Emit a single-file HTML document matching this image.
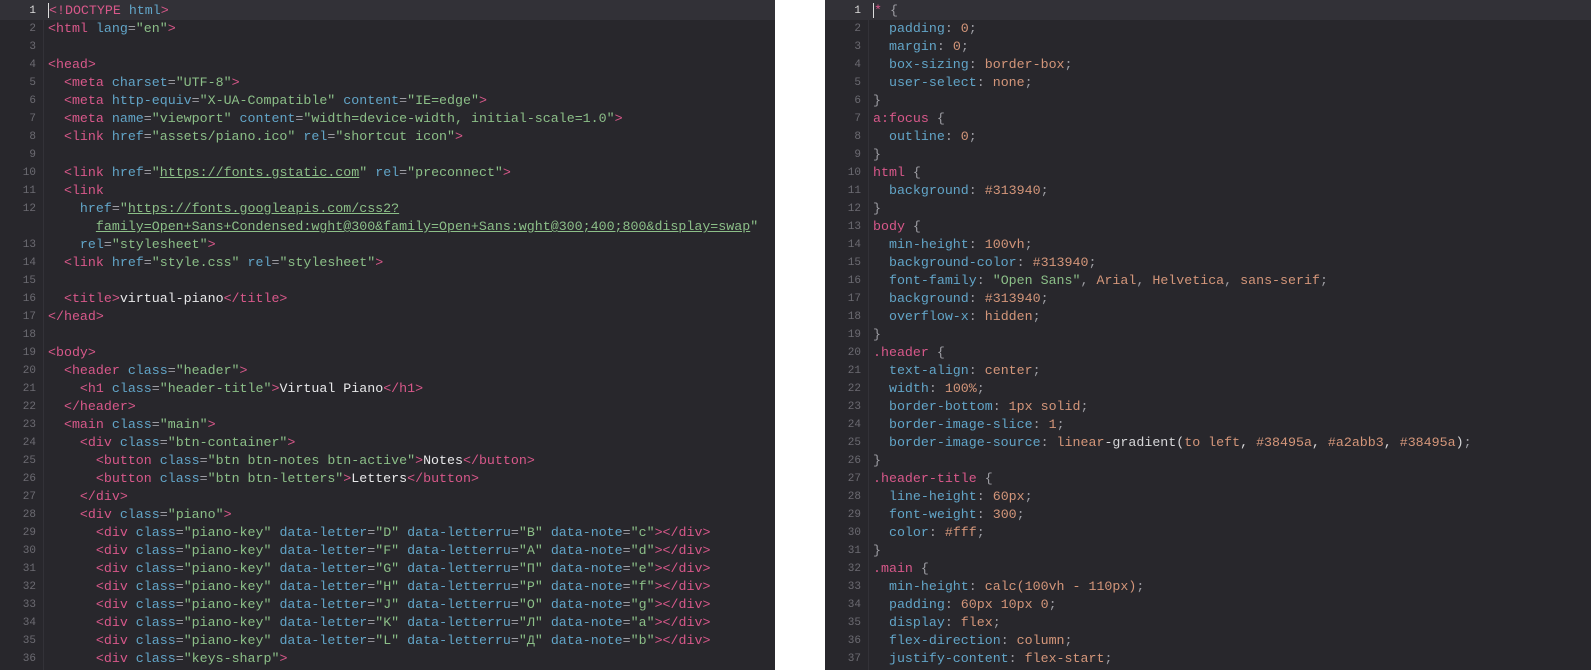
<!DOCTYPE html>
<html><head><meta charset="utf-8"><style>
*{margin:0;padding:0;box-sizing:border-box}
body{width:1591px;height:670px;background:#fff;position:relative;overflow:hidden;font-family:"Liberation Mono","DejaVu Sans Mono",monospace;font-size:13.3px}
.pane{position:absolute;top:0;height:670px;background:#28272c;padding-top:2px}
#L{left:0;width:775px}#R{left:825px;width:766px}
.g{position:absolute;top:0;left:43px;width:1px;height:670px;background:#333238}
.ln{height:18px;line-height:18px;white-space:pre;position:relative;color:#d8d8da}
.ln i{font-style:normal;position:absolute;left:0;width:36px;text-align:right;color:#6c6b72;font-size:11px}
.ln b{font-weight:normal;position:absolute;left:48px}
.cur{background:#323137;box-shadow:0 -2px 0 #323137}
.cur i{color:#ddd}
.t{color:#d8588a}.a{color:#62a5c8}.s{color:#8cbf88}.p{color:#9d9da3}.v{color:#d4967a}.w{color:#e8e8ea}
.cursor{border-left:1px solid #ddd}
</style></head><body>
<div class="pane" id="L"><div class="g"></div>
<div class="ln cur"><i>1</i><b><span class="t cursor">&lt;!DOCTYPE</span> <span class="a">html</span><span class="t">&gt;</span></b></div>
<div class="ln"><i>2</i><b><span class="t">&lt;html</span> <span class="a">lang</span><span class="p">=</span><span class="s">"en"</span><span class="t">&gt;</span></b></div>
<div class="ln"><i>3</i></div>
<div class="ln"><i>4</i><b><span class="t">&lt;head&gt;</span></b></div>
<div class="ln"><i>5</i><b>  <span class="t">&lt;meta</span> <span class="a">charset</span><span class="p">=</span><span class="s">"UTF-8"</span><span class="t">&gt;</span></b></div>
<div class="ln"><i>6</i><b>  <span class="t">&lt;meta</span> <span class="a">http-equiv</span><span class="p">=</span><span class="s">"X-UA-Compatible"</span> <span class="a">content</span><span class="p">=</span><span class="s">"IE=edge"</span><span class="t">&gt;</span></b></div>
<div class="ln"><i>7</i><b>  <span class="t">&lt;meta</span> <span class="a">name</span><span class="p">=</span><span class="s">"viewport"</span> <span class="a">content</span><span class="p">=</span><span class="s">"width=device-width, initial-scale=1.0"</span><span class="t">&gt;</span></b></div>
<div class="ln"><i>8</i><b>  <span class="t">&lt;link</span> <span class="a">href</span><span class="p">=</span><span class="s">"assets/piano.ico"</span> <span class="a">rel</span><span class="p">=</span><span class="s">"shortcut icon"</span><span class="t">&gt;</span></b></div>
<div class="ln"><i>9</i></div>
<div class="ln"><i>10</i><b>  <span class="t">&lt;link</span> <span class="a">href</span><span class="p">=</span><span class="s">"<u>https://fonts.gstatic.com</u>"</span> <span class="a">rel</span><span class="p">=</span><span class="s">"preconnect"</span><span class="t">&gt;</span></b></div>
<div class="ln"><i>11</i><b>  <span class="t">&lt;link</span></b></div>
<div class="ln"><i>12</i><b>    <span class="a">href</span><span class="p">=</span><span class="s">"<u>https://fonts.googleapis.com/css2?</u></span></b></div>
<div class="ln"><b>      <span class="s"><u>family=Open+Sans+Condensed:wght@300&amp;family=Open+Sans:wght@300;400;800&amp;display=swap</u>"</span></b></div>
<div class="ln"><i>13</i><b>    <span class="a">rel</span><span class="p">=</span><span class="s">"stylesheet"</span><span class="t">&gt;</span></b></div>
<div class="ln"><i>14</i><b>  <span class="t">&lt;link</span> <span class="a">href</span><span class="p">=</span><span class="s">"style.css"</span> <span class="a">rel</span><span class="p">=</span><span class="s">"stylesheet"</span><span class="t">&gt;</span></b></div>
<div class="ln"><i>15</i></div>
<div class="ln"><i>16</i><b>  <span class="t">&lt;title&gt;</span><span class="w">virtual-piano</span><span class="t">&lt;/title&gt;</span></b></div>
<div class="ln"><i>17</i><b><span class="t">&lt;/head&gt;</span></b></div>
<div class="ln"><i>18</i></div>
<div class="ln"><i>19</i><b><span class="t">&lt;body&gt;</span></b></div>
<div class="ln"><i>20</i><b>  <span class="t">&lt;header</span> <span class="a">class</span><span class="p">=</span><span class="s">"header"</span><span class="t">&gt;</span></b></div>
<div class="ln"><i>21</i><b>    <span class="t">&lt;h1</span> <span class="a">class</span><span class="p">=</span><span class="s">"header-title"</span><span class="t">&gt;</span><span class="w">Virtual Piano</span><span class="t">&lt;/h1&gt;</span></b></div>
<div class="ln"><i>22</i><b>  <span class="t">&lt;/header&gt;</span></b></div>
<div class="ln"><i>23</i><b>  <span class="t">&lt;main</span> <span class="a">class</span><span class="p">=</span><span class="s">"main"</span><span class="t">&gt;</span></b></div>
<div class="ln"><i>24</i><b>    <span class="t">&lt;div</span> <span class="a">class</span><span class="p">=</span><span class="s">"btn-container"</span><span class="t">&gt;</span></b></div>
<div class="ln"><i>25</i><b>      <span class="t">&lt;button</span> <span class="a">class</span><span class="p">=</span><span class="s">"btn btn-notes btn-active"</span><span class="t">&gt;</span><span class="w">Notes</span><span class="t">&lt;/button&gt;</span></b></div>
<div class="ln"><i>26</i><b>      <span class="t">&lt;button</span> <span class="a">class</span><span class="p">=</span><span class="s">"btn btn-letters"</span><span class="t">&gt;</span><span class="w">Letters</span><span class="t">&lt;/button&gt;</span></b></div>
<div class="ln"><i>27</i><b>    <span class="t">&lt;/div&gt;</span></b></div>
<div class="ln"><i>28</i><b>    <span class="t">&lt;div</span> <span class="a">class</span><span class="p">=</span><span class="s">"piano"</span><span class="t">&gt;</span></b></div>
<div class="ln"><i>29</i><b>      <span class="t">&lt;div</span> <span class="a">class</span><span class="p">=</span><span class="s">"piano-key"</span> <span class="a">data-letter</span><span class="p">=</span><span class="s">"D"</span> <span class="a">data-letterru</span><span class="p">=</span><span class="s">"В"</span> <span class="a">data-note</span><span class="p">=</span><span class="s">"c"</span><span class="t">&gt;&lt;/div&gt;</span></b></div>
<div class="ln"><i>30</i><b>      <span class="t">&lt;div</span> <span class="a">class</span><span class="p">=</span><span class="s">"piano-key"</span> <span class="a">data-letter</span><span class="p">=</span><span class="s">"F"</span> <span class="a">data-letterru</span><span class="p">=</span><span class="s">"А"</span> <span class="a">data-note</span><span class="p">=</span><span class="s">"d"</span><span class="t">&gt;&lt;/div&gt;</span></b></div>
<div class="ln"><i>31</i><b>      <span class="t">&lt;div</span> <span class="a">class</span><span class="p">=</span><span class="s">"piano-key"</span> <span class="a">data-letter</span><span class="p">=</span><span class="s">"G"</span> <span class="a">data-letterru</span><span class="p">=</span><span class="s">"П"</span> <span class="a">data-note</span><span class="p">=</span><span class="s">"e"</span><span class="t">&gt;&lt;/div&gt;</span></b></div>
<div class="ln"><i>32</i><b>      <span class="t">&lt;div</span> <span class="a">class</span><span class="p">=</span><span class="s">"piano-key"</span> <span class="a">data-letter</span><span class="p">=</span><span class="s">"H"</span> <span class="a">data-letterru</span><span class="p">=</span><span class="s">"Р"</span> <span class="a">data-note</span><span class="p">=</span><span class="s">"f"</span><span class="t">&gt;&lt;/div&gt;</span></b></div>
<div class="ln"><i>33</i><b>      <span class="t">&lt;div</span> <span class="a">class</span><span class="p">=</span><span class="s">"piano-key"</span> <span class="a">data-letter</span><span class="p">=</span><span class="s">"J"</span> <span class="a">data-letterru</span><span class="p">=</span><span class="s">"О"</span> <span class="a">data-note</span><span class="p">=</span><span class="s">"g"</span><span class="t">&gt;&lt;/div&gt;</span></b></div>
<div class="ln"><i>34</i><b>      <span class="t">&lt;div</span> <span class="a">class</span><span class="p">=</span><span class="s">"piano-key"</span> <span class="a">data-letter</span><span class="p">=</span><span class="s">"K"</span> <span class="a">data-letterru</span><span class="p">=</span><span class="s">"Л"</span> <span class="a">data-note</span><span class="p">=</span><span class="s">"a"</span><span class="t">&gt;&lt;/div&gt;</span></b></div>
<div class="ln"><i>35</i><b>      <span class="t">&lt;div</span> <span class="a">class</span><span class="p">=</span><span class="s">"piano-key"</span> <span class="a">data-letter</span><span class="p">=</span><span class="s">"L"</span> <span class="a">data-letterru</span><span class="p">=</span><span class="s">"Д"</span> <span class="a">data-note</span><span class="p">=</span><span class="s">"b"</span><span class="t">&gt;&lt;/div&gt;</span></b></div>
<div class="ln"><i>36</i><b>      <span class="t">&lt;div</span> <span class="a">class</span><span class="p">=</span><span class="s">"keys-sharp"</span><span class="t">&gt;</span></b></div>
</div>
<div class="pane" id="R"><div class="g"></div>
<div class="ln cur"><i>1</i><b><span class="t cursor">*</span> <span class="p">{</span></b></div>
<div class="ln"><i>2</i><b>  <span class="a">padding</span><span class="p">:</span> <span class="v">0</span><span class="p">;</span></b></div>
<div class="ln"><i>3</i><b>  <span class="a">margin</span><span class="p">:</span> <span class="v">0</span><span class="p">;</span></b></div>
<div class="ln"><i>4</i><b>  <span class="a">box-sizing</span><span class="p">:</span> <span class="v">border-box</span><span class="p">;</span></b></div>
<div class="ln"><i>5</i><b>  <span class="a">user-select</span><span class="p">:</span> <span class="v">none</span><span class="p">;</span></b></div>
<div class="ln"><i>6</i><b><span class="p">}</span></b></div>
<div class="ln"><i>7</i><b><span class="t">a:focus</span> <span class="p">{</span></b></div>
<div class="ln"><i>8</i><b>  <span class="a">outline</span><span class="p">:</span> <span class="v">0</span><span class="p">;</span></b></div>
<div class="ln"><i>9</i><b><span class="p">}</span></b></div>
<div class="ln"><i>10</i><b><span class="t">html</span> <span class="p">{</span></b></div>
<div class="ln"><i>11</i><b>  <span class="a">background</span><span class="p">:</span> <span class="v">#313940</span><span class="p">;</span></b></div>
<div class="ln"><i>12</i><b><span class="p">}</span></b></div>
<div class="ln"><i>13</i><b><span class="t">body</span> <span class="p">{</span></b></div>
<div class="ln"><i>14</i><b>  <span class="a">min-height</span><span class="p">:</span> <span class="v">100vh</span><span class="p">;</span></b></div>
<div class="ln"><i>15</i><b>  <span class="a">background-color</span><span class="p">:</span> <span class="v">#313940</span><span class="p">;</span></b></div>
<div class="ln"><i>16</i><b>  <span class="a">font-family</span><span class="p">:</span> <span class="s">"Open Sans"</span><span class="p">,</span> <span class="v">Arial</span><span class="p">,</span> <span class="v">Helvetica</span><span class="p">,</span> <span class="v">sans-serif</span><span class="p">;</span></b></div>
<div class="ln"><i>17</i><b>  <span class="a">background</span><span class="p">:</span> <span class="v">#313940</span><span class="p">;</span></b></div>
<div class="ln"><i>18</i><b>  <span class="a">overflow-x</span><span class="p">:</span> <span class="v">hidden</span><span class="p">;</span></b></div>
<div class="ln"><i>19</i><b><span class="p">}</span></b></div>
<div class="ln"><i>20</i><b><span class="t">.header</span> <span class="p">{</span></b></div>
<div class="ln"><i>21</i><b>  <span class="a">text-align</span><span class="p">:</span> <span class="v">center</span><span class="p">;</span></b></div>
<div class="ln"><i>22</i><b>  <span class="a">width</span><span class="p">:</span> <span class="v">100%</span><span class="p">;</span></b></div>
<div class="ln"><i>23</i><b>  <span class="a">border-bottom</span><span class="p">:</span> <span class="v">1px solid</span><span class="p">;</span></b></div>
<div class="ln"><i>24</i><b>  <span class="a">border-image-slice</span><span class="p">:</span> <span class="v">1</span><span class="p">;</span></b></div>
<div class="ln"><i>25</i><b>  <span class="a">border-image-source</span><span class="p">:</span> <span class="v">linear</span>-gradient(<span class="v">to left</span>, <span class="v">#38495a</span>, <span class="v">#a2abb3</span>, <span class="v">#38495a</span>)<span class="p">;</span></b></div>
<div class="ln"><i>26</i><b><span class="p">}</span></b></div>
<div class="ln"><i>27</i><b><span class="t">.header-title</span> <span class="p">{</span></b></div>
<div class="ln"><i>28</i><b>  <span class="a">line-height</span><span class="p">:</span> <span class="v">60px</span><span class="p">;</span></b></div>
<div class="ln"><i>29</i><b>  <span class="a">font-weight</span><span class="p">:</span> <span class="v">300</span><span class="p">;</span></b></div>
<div class="ln"><i>30</i><b>  <span class="a">color</span><span class="p">:</span> <span class="v">#fff</span><span class="p">;</span></b></div>
<div class="ln"><i>31</i><b><span class="p">}</span></b></div>
<div class="ln"><i>32</i><b><span class="t">.main</span> <span class="p">{</span></b></div>
<div class="ln"><i>33</i><b>  <span class="a">min-height</span><span class="p">:</span> <span class="v">calc(100vh - 110px)</span><span class="p">;</span></b></div>
<div class="ln"><i>34</i><b>  <span class="a">padding</span><span class="p">:</span> <span class="v">60px 10px 0</span><span class="p">;</span></b></div>
<div class="ln"><i>35</i><b>  <span class="a">display</span><span class="p">:</span> <span class="v">flex</span><span class="p">;</span></b></div>
<div class="ln"><i>36</i><b>  <span class="a">flex-direction</span><span class="p">:</span> <span class="v">column</span><span class="p">;</span></b></div>
<div class="ln"><i>37</i><b>  <span class="a">justify-content</span><span class="p">:</span> <span class="v">flex-start</span><span class="p">;</span></b></div>
</div>
</body></html>
